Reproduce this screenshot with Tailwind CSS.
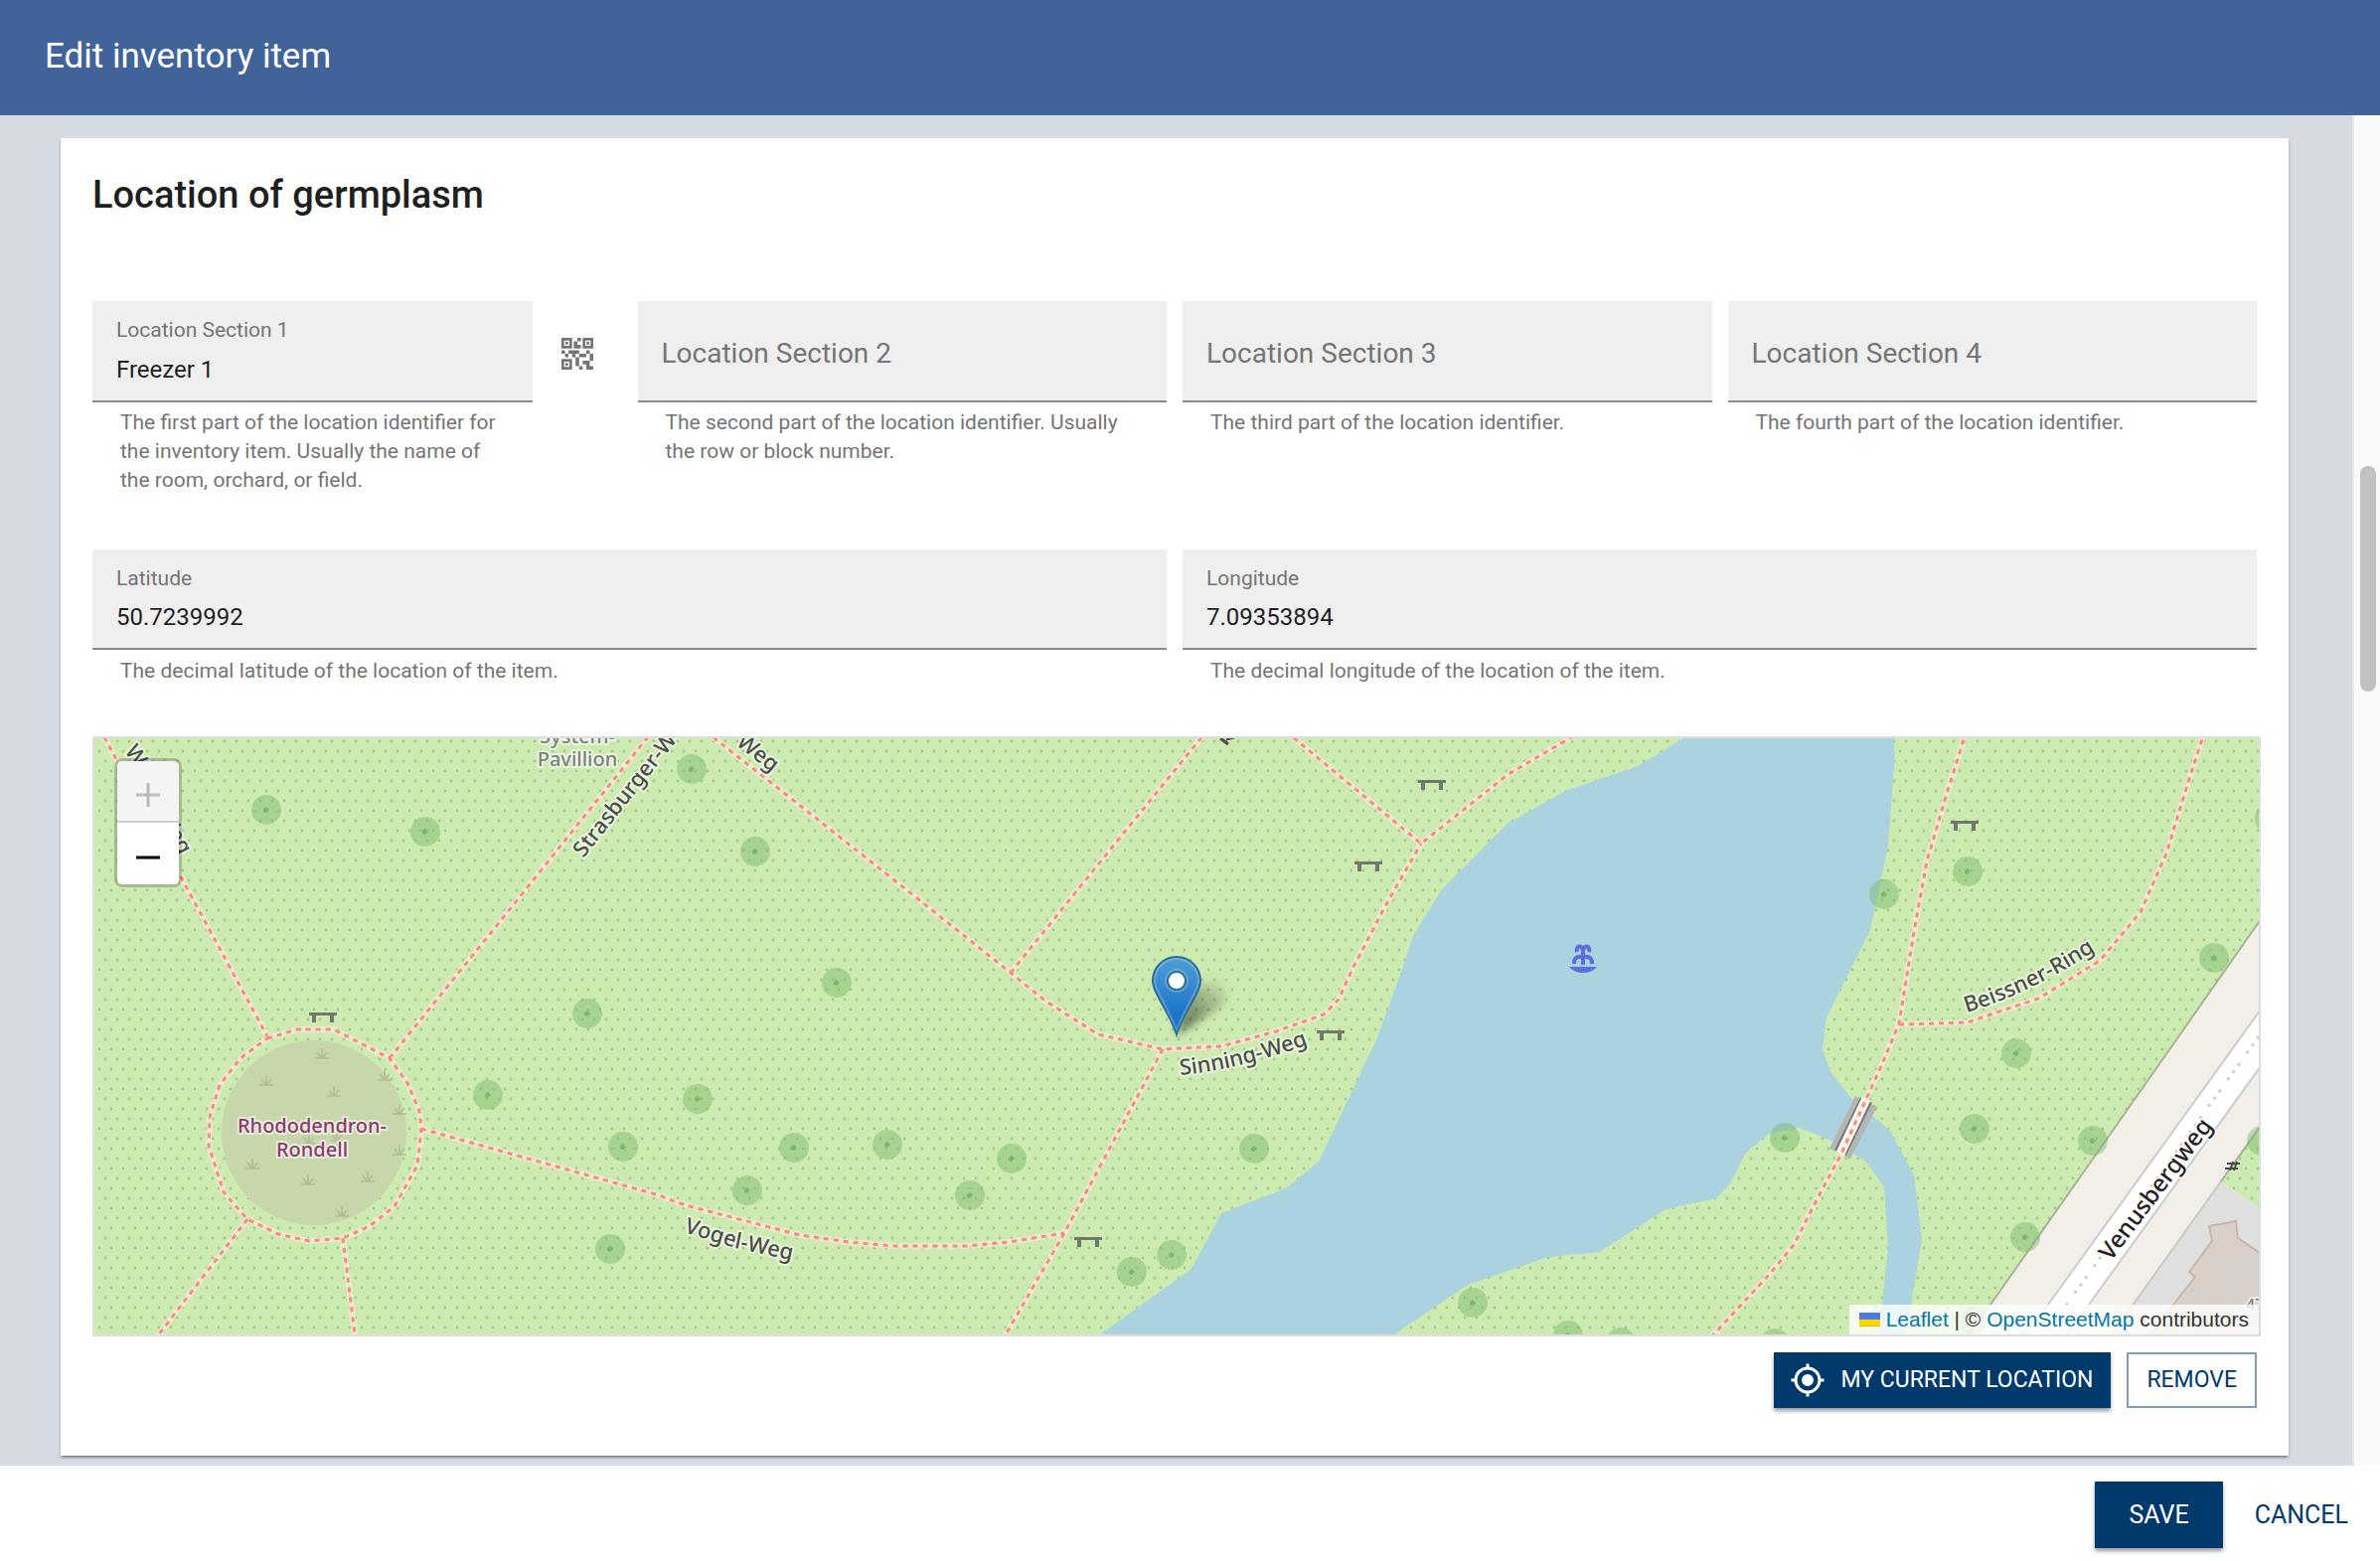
<!DOCTYPE html>
<html lang="en">
<head>
  <meta charset="UTF-8" />
  <meta name="viewport" content="width=device-width, initial-scale=1.0"/>
  <title>Edit inventory item</title>
  <script src="https://cdn.jsdelivr.net/npm/@tailwindcss/browser@4"></script>
</head>
<body class="bg-white text-[#1f1f1f] font-['Roboto',sans-serif]">

<div class="min-h-screen flex flex-col">

  <!-- Header -->
  <header class="h-[116px] shrink-0 bg-[#40639a] flex items-center px-[45px] pb-[2px]">
    <h1 class="text-white text-[35px] leading-10">Edit inventory item</h1>
  </header>

  <div class="flex flex-1 bg-[#d5dae3]">
    <main class="flex-1 min-w-0 pt-[23px] pb-[10px] pl-[61px] pr-16">

      <section class="bg-white px-8 pt-[33px] pb-12 shadow-[0_3px_2px_-2px_rgba(0,0,0,0.35),0_2px_3px_rgba(0,0,0,0.25)]">
        <h2 class="text-[38px] leading-12 font-medium">Location of germplasm</h2>

        <!-- Location sections -->
        <div class="grid grid-cols-4 gap-4 mt-[83px]">
          <div class="flex">
            <div class="flex-1 min-w-0">
              <div class="relative h-[102px] bg-[#efefef] border-b-2 border-[#8a8a8a]">
                <label for="section1" class="absolute left-6 top-[15px] text-[21px] leading-7 text-[#757575]">Location Section 1</label>
                <input id="section1" type="text" value="Freezer 1" class="w-full h-full pl-6 pr-6 pt-[38px] text-[24px] outline-none" />
              </div>
              <p class="mt-[6px] px-7 text-[21px] leading-[29px] text-[#757575]">The first part of the location identifier for the inventory item. Usually the name of the room, orchard, or field.</p>
            </div>
            <button type="button" aria-label="Scan code" class="w-[90px] h-[106px] shrink-0 flex items-center justify-center">
              <svg class="w-8 h-8 fill-[#757575]" viewBox="3 3 18 18"><path d="M15,21h-2v-2h2V21z M13,14h-2v5h2V14z M21,12h-2v4h2V12z M19,10h-2v2h2V10z M7,12H5v2h2V12z M5,10H3v2h2V10z M12,5h2V3h-2V5z M4.5,4.5v3h3v-3H4.5z M9,9H3V3h6V9z M4.5,16.5v3h3v-3H4.5z M9,21H3v-6h6V21z M16.5,4.5v3h3v-3H16.5z M21,9h-6V3h6V9z M19,19v-3l-4,0v2h2v3h4v-2H19z M17,12l-4,0v2h4V12z M13,10H7v2h2v2h2v-2h2V10z M14,9V7h-2V5h-2v4L14,9z M6.75,5.25h-1.5v1.5h1.5V5.25z M6.75,17.25h-1.5v1.5h1.5V17.25z M18.75,5.25h-1.5v1.5h1.5V5.25z"/></svg>
            </button>
          </div>

          <div>
            <div class="relative h-[102px] bg-[#efefef] border-b-2 border-[#8a8a8a]">
              <label for="section2" class="absolute left-6 inset-y-0 flex items-center pt-[6px] text-[28px] text-[#757575]">Location Section 2</label>
              <input id="section2" type="text" class="w-full h-full px-6 text-[24px] outline-none" />
            </div>
            <p class="mt-[6px] px-7 text-[21px] leading-[29px] text-[#757575]">The second part of the location identifier. Usually the row or block number.</p>
          </div>

          <div>
            <div class="relative h-[102px] bg-[#efefef] border-b-2 border-[#8a8a8a]">
              <label for="section3" class="absolute left-6 inset-y-0 flex items-center pt-[6px] text-[28px] text-[#757575]">Location Section 3</label>
              <input id="section3" type="text" class="w-full h-full px-6 text-[24px] outline-none" />
            </div>
            <p class="mt-[6px] px-7 text-[21px] leading-[29px] text-[#757575]">The third part of the location identifier.</p>
          </div>

          <div>
            <div class="relative h-[102px] bg-[#efefef] border-b-2 border-[#8a8a8a]">
              <label for="section4" class="absolute left-6 inset-y-0 flex items-center pt-[6px] text-[28px] text-[#757575]">Location Section 4</label>
              <input id="section4" type="text" class="w-full h-full px-6 text-[24px] outline-none" />
            </div>
            <p class="mt-[6px] px-7 text-[21px] leading-[29px] text-[#757575]">The fourth part of the location identifier.</p>
          </div>
        </div>

        <!-- Coordinates -->
        <div class="grid grid-cols-2 gap-4 mt-[55px]">
          <div>
            <div class="relative h-[101px] bg-[#efefef] border-b-2 border-[#8a8a8a]">
              <label for="latitude" class="absolute left-6 top-[15px] text-[21px] leading-7 text-[#757575]">Latitude</label>
              <input id="latitude" type="text" value="50.7239992" class="w-full h-full px-6 pt-9 text-[24px] outline-none" />
            </div>
            <p class="mt-[7px] px-7 text-[21px] leading-[29px] text-[#757575]">The decimal latitude of the location of the item.</p>
          </div>
          <div>
            <div class="relative h-[101px] bg-[#efefef] border-b-2 border-[#8a8a8a]">
              <label for="longitude" class="absolute left-6 top-[15px] text-[21px] leading-7 text-[#757575]">Longitude</label>
              <input id="longitude" type="text" value="7.09353894" class="w-full h-full px-6 pt-9 text-[24px] outline-none" />
            </div>
            <p class="mt-[7px] px-7 text-[21px] leading-[29px] text-[#757575]">The decimal longitude of the location of the item.</p>
          </div>
        </div>

        <!-- Map -->
        <div class="relative mt-[51px] -mr-1 h-[604px] border-2 border-[#dddddd] bg-[#cdebb0] overflow-hidden">
          <svg class="block w-full h-full font-['Noto_Sans',sans-serif]" viewBox="95 743 2178 600" preserveAspectRatio="xMidYMid slice">
            <defs>
              <pattern id="dots" width="12" height="20" patternUnits="userSpaceOnUse">
                <circle cx="4" cy="16" r="1.4" fill="#9fca86"/>
                <circle cx="10" cy="6" r="1.4" fill="#9fca86"/>
              </pattern>
              <linearGradient id="pin" x1="0" y1="0" x2="0" y2="1">
                <stop offset="0" stop-color="#4f9fd6"/>
                <stop offset="0.75" stop-color="#1c74c7"/>
                <stop offset="1" stop-color="#126fc6"/>
              </linearGradient>
              <linearGradient id="shade" gradientUnits="userSpaceOnUse" x1="1184" y1="1040" x2="1236" y2="990">
                <stop offset="0" stop-color="#000" stop-opacity="0.6"/>
                <stop offset="1" stop-color="#000" stop-opacity="0"/>
              </linearGradient>
              <filter id="soft" x="-50%" y="-50%" width="200%" height="200%"><feGaussianBlur stdDeviation="4"/></filter>
              <g id="tree">
                <circle r="15" fill="#7ab66c" fill-opacity="0.45"/>
                <path d="M-3 -1L0 -3L3 0L0 3L-3 2Z" fill="#73aa66" fill-opacity="0.75"/>
              </g>
              <path id="bench" d="M-14 -5H14V-2H11V5H7V-2H-7V5H-11V-2H-14Z" fill="#72776c"/>
              <path id="tuft" d="M-7 5H7M0 5V-5M-1 4L-5 -1M1 4L5 -1" fill="none" stroke="#afbd92" stroke-width="1.6"/>
              <g id="ways" fill="none">
                <path d="M100 733L117 764L179 877L269 1043"/>
                <path d="M392 1065L489 945L655 738"/>
                <path d="M424 1136L660 1202L690 1213L805 1243L854 1250L900 1254H973L1015 1250L1071 1241"/>
                <path d="M249 1227L152 1353"/>
                <path d="M345 1246L358 1350"/>
                <path d="M710 736L770 783L904 889L1017 979L1053 1008L1105 1041L1170 1056L1229 1053L1284 1038L1332 1021L1347 1006L1361 975L1395 910L1430 849"/>
                <path d="M1017 979L1114 859L1215 735"/>
                <path d="M1170 1056L1071 1241L1008 1350"/>
                <path d="M1294 736L1430 849L1518 779L1590 737"/>
                <path d="M1979 735L1958 802L1939 867L1927 932L1911 1030L1894 1071L1878 1106L1852 1163L1829 1206L1805 1253L1780 1283L1718 1350"/>
                <path d="M1911 1031L1980 1029L2000 1022L2051 1005L2113 967L2154 918L2180 859L2202 787L2219 735"/>
                <path d="M269 1045L299 1036L336 1036L392 1065L410 1090L422 1118L424 1136L420 1173L397 1214L372 1234L345 1246L311 1249L280 1242L249 1227L225 1200L210 1153L211 1124L221 1092L242 1065Z"/>
              </g>
              <path id="lblSinning" d="M1188 1082Q1250 1076 1322 1049"/>
              <path id="lblBeissner" d="M1979 1019Q2046 999 2114 953"/>
              <path id="lblVenus" d="M2124 1270L2234 1124"/>
              <path id="lblStras" d="M587 864L700 722"/>
              <path id="lblVogel" d="M688 1240L740 1256L810 1271"/>
            </defs>

            <rect x="95" y="743" width="2178" height="600" fill="#cdebb0"/>
            <rect x="95" y="743" width="2178" height="600" fill="url(#dots)"/>

            <!-- water -->
            <path fill="#aad3df" d="M1694 743L1648 771L1575 796L1518 828L1451 895L1422 942L1409 981L1386 1044L1365 1089L1327 1169L1294 1196L1229 1221L1199 1277L1107 1343L1095 1351L1390 1351L1403 1343L1477 1293L1558 1265L1610 1260L1676 1217L1727 1206L1741 1191L1757 1160L1780 1141L1811 1135L1843 1148L1878 1169L1896 1195L1900 1255L1894 1312L1888 1350H1917L1934 1247L1926 1183L1902 1138L1864 1106L1842 1079L1834 1055L1838 1024L1882 936L1900 851L1907 759L1905 743Z"/>

            <!-- flower bed -->
            <circle cx="316" cy="1140" r="93" fill="#c8d7ab"/>
            <use href="#tuft" x="324" y="1060"/><use href="#tuft" x="268" y="1087"/><use href="#tuft" x="336" y="1098"/>
            <use href="#tuft" x="387" y="1082"/><use href="#tuft" x="402" y="1116"/><use href="#tuft" x="311" y="1146"/>
            <use href="#tuft" x="339" y="1143"/><use href="#tuft" x="402" y="1157"/><use href="#tuft" x="254" y="1171"/>
            <use href="#tuft" x="370" y="1184"/><use href="#tuft" x="310" y="1187"/><use href="#tuft" x="344" y="1219"/>

            <!-- road and buildings -->
            <path fill="#f2efe9" d="M2280 918L2121 1145L2003 1313L1976 1350H2280Z"/>
            <path fill="none" stroke="#a8b295" stroke-width="2" d="M2280 918L2121 1145L2003 1313L1976 1350"/>
            <path fill="#cdebb0" d="M2280 1126L2235 1189L2280 1220Z"/>
            <path fill="url(#dots)" d="M2280 1126L2235 1189L2280 1220Z"/>
            <path fill="#dfdfdf" d="M2235 1189L2280 1220V1350H2120Z"/>
            <path fill="none" stroke="#c9c9c4" stroke-width="2" d="M2235 1189L2120 1350"/>
            <path fill="none" stroke="#a8b295" stroke-width="2" d="M2280 1126L2235 1189"/>
            <path fill="#d9d0c9" stroke="#c8b5a7" stroke-width="2" d="M2223 1234L2250 1229L2252 1246L2280 1265V1350H2160L2187 1313L2209 1285L2203 1280L2226 1249Z"/>
            <path fill="#fff" stroke="#cbcbcb" stroke-width="2" d="M2280 1009L2061 1313L2034 1350H2075L2102 1313L2280 1066Z"/>
            <path fill="none" stroke="#d8c6dc" stroke-width="3" stroke-dasharray="3 6 3 6 3 12" d="M2273 1043L2066 1332"/>
            <path fill="none" stroke="#4a4a4a" stroke-width="2" d="M2241 1171H2254M2239 1176H2252M2244 1178L2247 1169M2248 1178L2251 1169"/>

            <!-- footbridge -->
            <path fill="#b5b5b5" d="M1867 1103L1889 1114L1862 1166L1841 1156Z"/>
            <path stroke="#777" stroke-width="13" d="M1878 1107L1852 1160"/>
            <path stroke="#fff" stroke-width="9" d="M1878 1106L1852 1161"/>

            <!-- footways -->
            <use href="#ways" stroke="#f3ead9" stroke-opacity="0.75" stroke-width="6"/>
            <use href="#ways" stroke="#fa8b7c" stroke-width="3" stroke-dasharray="5 5"/>

            <!-- trees -->
            <use href="#tree" x="268" y="815"/><use href="#tree" x="428" y="837"/><use href="#tree" x="591" y="1020"/>
            <use href="#tree" x="491" y="1102"/><use href="#tree" x="627" y="1154"/><use href="#tree" x="614" y="1257"/>
            <use href="#tree" x="696" y="774"/><use href="#tree" x="760" y="857"/><use href="#tree" x="842" y="989"/>
            <use href="#tree" x="702" y="1106"/><use href="#tree" x="799" y="1155"/><use href="#tree" x="893" y="1152"/>
            <use href="#tree" x="1018" y="1166"/><use href="#tree" x="752" y="1198"/><use href="#tree" x="976" y="1203"/>
            <use href="#tree" x="1179" y="1263"/><use href="#tree" x="1139" y="1280"/><use href="#tree" x="1262" y="1156"/>
            <use href="#tree" x="1482" y="1311"/><use href="#tree" x="1578" y="1344"/><use href="#tree" x="1631" y="1351"/>
            <use href="#tree" x="1786" y="1352"/><use href="#tree" x="1796" y="1145"/><use href="#tree" x="1896" y="900"/>
            <use href="#tree" x="1980" y="877"/><use href="#tree" x="2228" y="964"/><use href="#tree" x="2029" y="1060"/>
            <use href="#tree" x="1987" y="1136"/><use href="#tree" x="2106" y="1148"/><use href="#tree" x="2038" y="1245"/>
            <use href="#tree" x="2284" y="824"/><use href="#tree" x="2276" y="1148"/><use href="#tree" x="1984" y="1329"/>

            <!-- benches -->
            <use href="#bench" x="325" y="1024"/><use href="#bench" x="1095" y="1250"/><use href="#bench" x="1441" y="790"/>
            <use href="#bench" x="1377" y="872"/><use href="#bench" x="1339" y="1042"/><use href="#bench" x="1977" y="831"/>

            <!-- fountain -->
            <path fill="#5a6fe3" d="M1579 973H1607Q1602 979 1593 979T1579 973Z"/>
            <path fill="none" stroke="#5a6fe3" stroke-width="4" d="M1593 971V954M1593 963H1588Q1584 964 1584 970M1593 963H1598Q1602 964 1602 970M1593 956Q1591 951 1588 953Q1586 955 1587 958M1593 956Q1595 951 1598 953Q1600 955 1599 958"/>

            <!-- labels -->
            <g class="font-medium" stroke="#fff" stroke-opacity="0.6" stroke-width="4" stroke-linejoin="round" paint-order="stroke">
              <g class="text-[20px]" text-anchor="middle">
                <text x="314" y="1140" fill="#8c3a6c">Rhododendron-</text>
                <text x="314" y="1164" fill="#8c3a6c">Rondell</text>
                <text x="581" y="748" fill="#808080">System-</text>
                <text x="581" y="771" fill="#808080">Pavillion</text>
              </g>
              <g class="text-[22px]" fill="#4a4d48">
                <text><textPath href="#lblSinning">Sinning-Weg</textPath></text>
                <text><textPath href="#lblBeissner">Beissner-Ring</textPath></text>
                <text><textPath href="#lblVogel">Vogel-Weg</textPath></text>
                <text><textPath href="#lblStras">Strasburger-Weg</textPath></text>
                <text transform="translate(740 749) rotate(38)">Weg</text>
                <text transform="translate(125 756) rotate(55)">W</text>
                <text transform="translate(159 820) rotate(62)">Weg</text>
              </g>
              <text class="text-[24px]" fill="#222"><textPath href="#lblVenus">Venusbergweg</textPath></text>
              <text class="text-[16px]" x="2260" y="1319" fill="#777">47</text>
            </g>
            <path fill="none" stroke="#4a4f45" stroke-width="3" d="M1228 743L1236 749M1234 744L1242 742"/>

            <!-- marker -->
            <path fill="url(#shade)" filter="url(#soft)" d="M1184 1042L1196 1002Q1212 982 1232 988Q1242 1000 1228 1014Z"/>
            <path fill="url(#pin)" stroke="#2e6c97" stroke-width="2" d="M1184 1041C1180 1028 1172 1016 1166 1004C1162 997 1160 993 1160 987A24 24 0 0 1 1208 987C1208 993 1206 997 1202 1004C1196 1016 1188 1028 1184 1041Z"/>
            <path fill="none" stroke="#fff" stroke-opacity="0.22" stroke-width="2" d="M1184 1036C1180 1026 1174 1015 1168 1003C1164 996 1162 992 1162 987A22 22 0 0 1 1206 987C1206 992 1204 996 1200 1003C1194 1015 1188 1026 1184 1036Z"/>
            <circle cx="1184" cy="987" r="11" fill="none" stroke="#fff" stroke-opacity="0.2" stroke-width="2"/>
            <circle cx="1184" cy="987" r="9" fill="#fff" stroke="#2e6c97" stroke-width="2"/>
          </svg>

          <!-- Zoom control -->
          <div class="absolute left-5 top-5 border-[3px] border-black/20 rounded-lg bg-clip-padding overflow-hidden">
            <button type="button" aria-label="Zoom in" disabled class="w-[62px] h-[62px] bg-[#f4f4f4] border-b-2 border-[#cccccc] flex items-center justify-center pt-2">
              <svg class="w-6 h-6" viewBox="0 0 24 24"><path d="M0 12H24M12 0V24" stroke="#bbb" stroke-width="3"/></svg>
            </button>
            <button type="button" aria-label="Zoom out" class="w-[62px] h-[62px] bg-white flex items-center justify-center pt-2">
              <svg class="w-6 h-6" viewBox="0 0 24 24"><path d="M0 12H24" stroke="#000" stroke-width="3"/></svg>
            </button>
          </div>

          <!-- Attribution -->
          <div class="absolute right-0 bottom-0 bg-white/80 px-[10px] flex items-center gap-[6px] font-['Liberation_Sans',Arial,sans-serif] text-[21px] leading-[30px] text-[#333333]">
            <svg class="w-[21px] h-[14px]" viewBox="0 0 21 14"><path fill="#4c7be1" d="M0 0H21V7H0Z"/><path fill="#ffd500" d="M0 7H21V13H0Z"/><path fill="#e0bc00" d="M0 13H21V14H0Z"/></svg>
            <span><a href="#" class="text-[#0078a8]">Leaflet</a> | © <a href="#" class="text-[#0078a8]">OpenStreetMap</a> contributors</span>
          </div>
        </div>

        <!-- Map actions -->
        <div class="flex justify-end gap-4 mt-4">
          <button type="button" class="h-14 pl-4 pr-[18px] flex items-center gap-4 bg-[#00396b] text-white text-[23px] shadow-[0_3px_4px_rgba(0,0,0,0.4)]">
            <svg class="w-9 h-9 fill-white" viewBox="0 0 24 24"><path d="M12,8A4,4 0 0,1 16,12A4,4 0 0,1 12,16A4,4 0 0,1 8,12A4,4 0 0,1 12,8M3.05,13H1V11H3.05C3.5,6.83 6.83,3.5 11,3.05V1H13V3.05C17.17,3.5 20.5,6.83 20.95,11H23V13H20.95C20.5,17.17 17.17,20.5 13,20.95V23H11V20.95C6.83,20.5 3.5,17.17 3.05,13M12,5A7,7 0 0,0 5,12A7,7 0 0,0 12,19A7,7 0 0,0 19,12A7,7 0 0,0 12,5Z"/></svg>
            MY CURRENT LOCATION
          </button>
          <button type="button" class="h-14 px-[18px] border-2 border-[#7f9cb8] text-[#00396b] text-[23px]">REMOVE</button>
        </div>
      </section>
    </main>

    <!-- Scrollbar -->
    <div class="w-7 shrink-0 bg-[#fafafa] border-l-2 border-[#e8e8e8] pt-[353px] pl-[6px]">
      <div class="w-4 h-[227px] rounded-full bg-[#c1c1c1]"></div>
    </div>
  </div>

  <!-- Footer -->
  <footer class="h-24 shrink-0 bg-white flex items-start justify-end gap-4 pt-4 pr-4">
    <button type="button" class="h-[67px] px-[34px] bg-[#00396b] text-white text-[25px] shadow-[0_3px_4px_rgba(0,0,0,0.4)]">SAVE</button>
    <button type="button" class="h-[67px] px-4 text-[#00396b] text-[25px]">CANCEL</button>
  </footer>

</div>

</body>
</html>
